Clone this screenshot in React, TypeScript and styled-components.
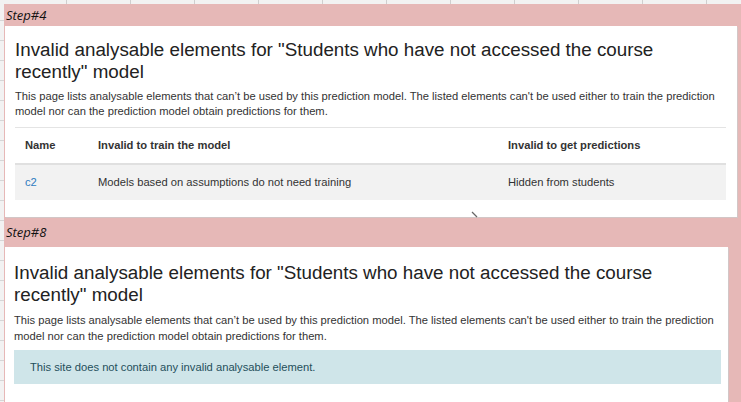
import React from "react";
import styled, { createGlobalStyle } from "styled-components";

const GlobalStyle = createGlobalStyle`
  html, body {
    margin: 0;
    padding: 0;
  }
  body {
    font-family: "Liberation Sans", Arial, sans-serif;
    background: #f4f4f4;
  }
`;

const Sheet = styled.div`
  position: relative;
  width: 741px;
  height: 402px;
  overflow: hidden;
  box-sizing: border-box;
  padding: 4px 0 0 4px;
  background-color: #f2f2f2;
  background-image: repeating-linear-gradient(
      to right,
      transparent 0 63px,
      #cfcfcf 63px 64px
    ),
    repeating-linear-gradient(to bottom, transparent 0 19px, #d6d6d6 19px 20px);
  background-position: 3px 0, 0 1px;
`;

const Band = styled.div`
  background: #e6b8b7;
  height: 100%;
  padding-left: 1px;
  display: flex;
  flex-direction: column;
`;

const StepLabel = styled.div<{ $h: number }>`
  flex: none;
  height: ${(p) => p.$h}px;
  line-height: ${(p) => p.$h}px;
  padding-left: 1px;
  font-family: "Open Sans", "Liberation Sans", sans-serif;
  font-style: italic;
  font-size: 13px;
  color: #111;
`;

const Shot = styled.div<{ $w: number; $h?: number; $pad: string }>`
  flex: ${(p) => (p.$h ? "none" : "1")};
  width: ${(p) => p.$w}px;
  height: ${(p) => (p.$h ? `${p.$h}px` : "auto")};
  box-sizing: border-box;
  padding: ${(p) => p.$pad};
  background: #fff;
  box-shadow: 1px 1px 0 #d2c6c6;
  color: #333;
  position: relative;
`;

const Title = styled.h2`
  margin: 0;
  font-weight: 400;
  font-size: 18.8px;
  line-height: 22px;
  color: #222;
`;

const Intro = styled.p<{ $lh: number }>`
  margin: 6px 0 0;
  font-size: 11.2px;
  line-height: ${(p) => p.$lh}px;
  color: #333;
`;

const Table = styled.table`
  margin-top: 8px;
  width: 100%;
  border-collapse: collapse;
  font-size: 11.2px;
  color: #333;

  th,
  td {
    text-align: left;
    padding: 10px 10px;
    line-height: 15px;
    vertical-align: middle;
  }
  th {
    font-weight: 700;
    border-top: 1px solid #e4e4e4;
    border-bottom: 2px solid #e0e0e0;
  }
  tbody tr {
    background: #f2f2f2;
  }
`;

const NameLink = styled.a`
  color: #2f7bc0;
  text-decoration: none;
`;

const Alert = styled.div`
  margin-top: 6px;
  height: 34px;
  display: flex;
  align-items: center;
  padding-left: 16px;
  background: #cfe5e9;
  color: #1f4f5b;
  font-size: 11.2px;
`;

const Cursor = styled.svg`
  position: absolute;
  left: 466px;
  top: 185px;
`;

const TITLE =
  'Invalid analysable elements for "Students who have not accessed the course recently" model';
const INTRO =
  "This page lists analysable elements that can\u2019t be used by this prediction model. The listed elements can't be used either to train the prediction model nor can the prediction model obtain predictions for them.";

export default function App() {
  return (
    <>
      <GlobalStyle />
      <Sheet>
        <Band>
          <StepLabel $h={22}>Step#4</StepLabel>
          <Shot $w={732} $h={191} $pad="13px 11px 0 10px">
            <Title>{TITLE}</Title>
            <Intro $lh={15}>{INTRO}</Intro>
            <Table>
              <colgroup>
                <col style={{ width: 73 }} />
                <col style={{ width: 410 }} />
                <col />
              </colgroup>
              <thead>
                <tr>
                  <th>Name</th>
                  <th>Invalid to train the model</th>
                  <th>Invalid to get predictions</th>
                </tr>
              </thead>
              <tbody>
                <tr>
                  <td>
                    <NameLink href="#">c2</NameLink>
                  </td>
                  <td>Models based on assumptions do not need training</td>
                  <td>Hidden from students</td>
                </tr>
              </tbody>
            </Table>
            <Cursor width="8" height="8" viewBox="0 0 8 8">
              <path d="M1 1 L6 6" stroke="#666" strokeWidth="1.2" />
            </Cursor>
          </Shot>
          <StepLabel $h={30}>Step#8</StepLabel>
          <Shot $w={723} $pad="15px 7px 0 9px">
            <Title>{TITLE}</Title>
            <Intro $lh={16}>{INTRO}</Intro>
            <Alert>This site does not contain any invalid analysable element.</Alert>
          </Shot>
        </Band>
      </Sheet>
    </>
  );
}
